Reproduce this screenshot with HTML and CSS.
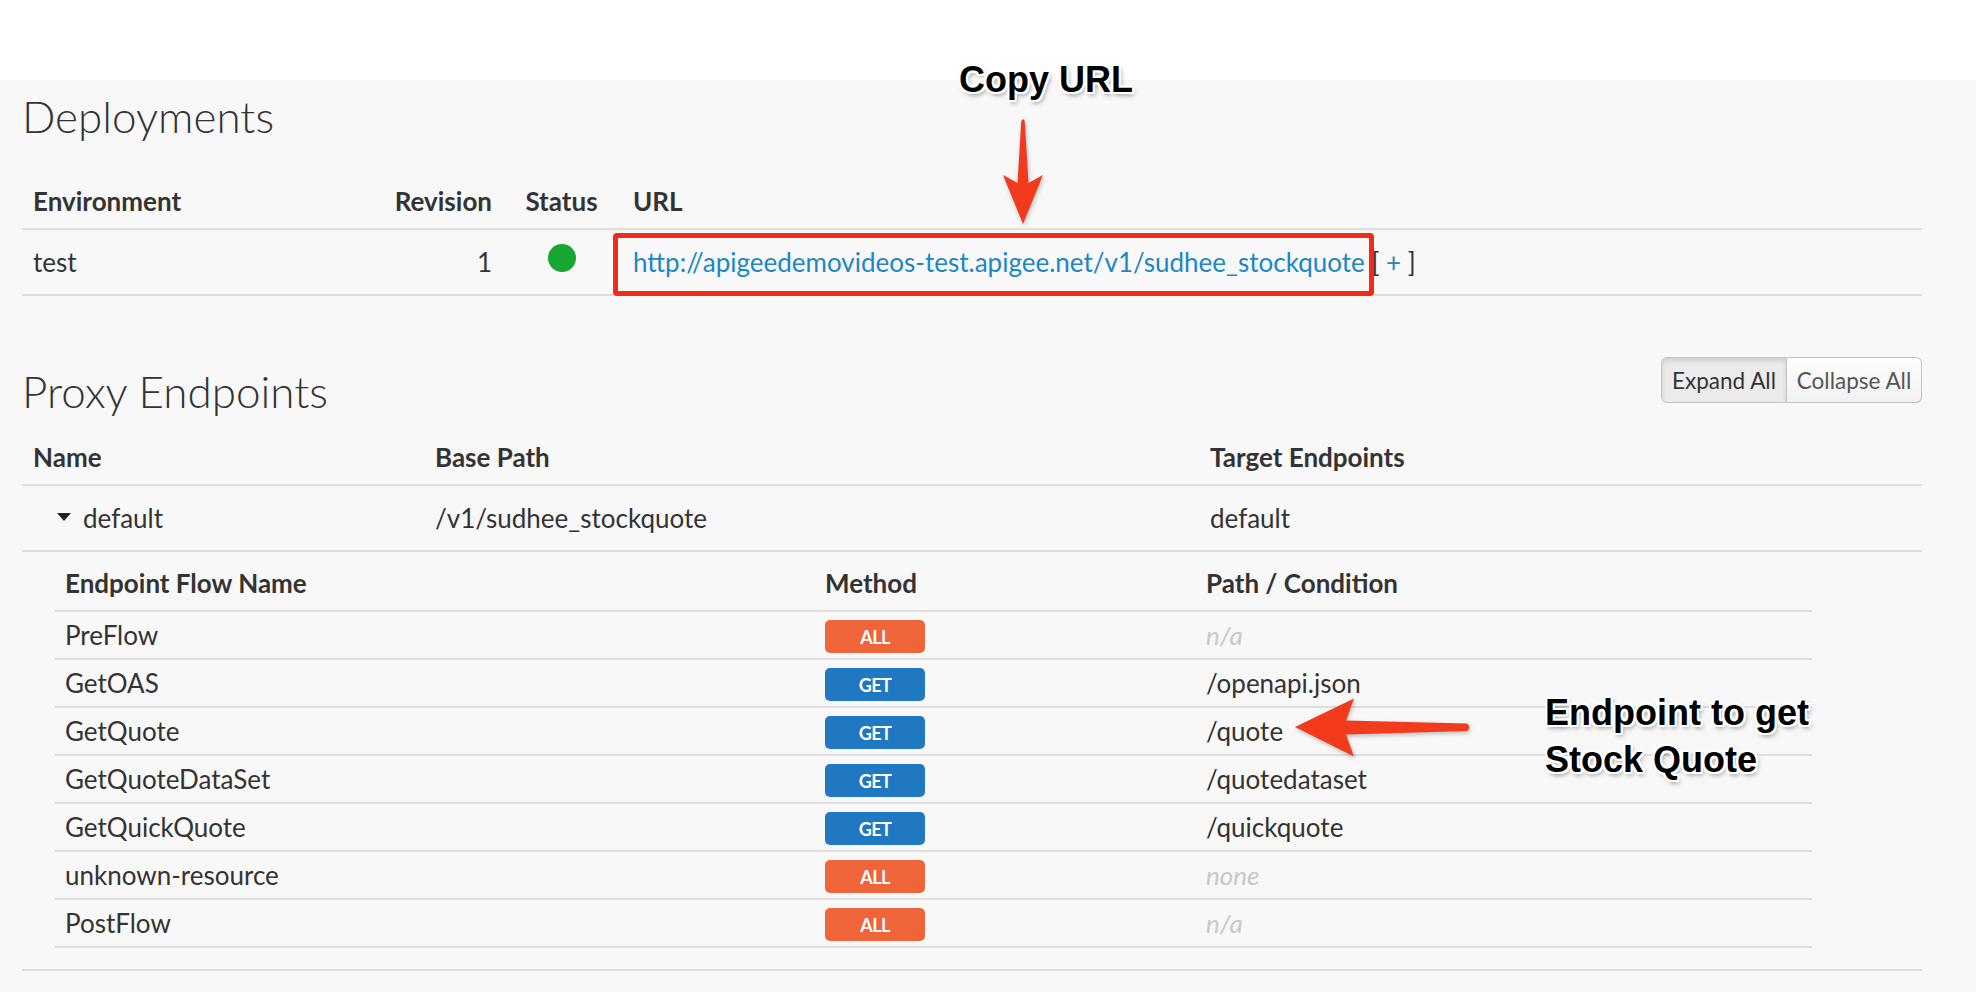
FILE: index.html
```html
<!DOCTYPE html>
<html lang="en">
<head>
<meta charset="utf-8">
<title>API Proxy Overview</title>
<link rel="stylesheet" href="styles.css">
</head>
<body>
<div class="topbar"></div>
<main class="content">
  <section class="deployments">
    <h2 class="section-title">Deployments</h2>
    <table class="tbl deploy-tbl">
      <colgroup><col class="c-env"><col class="c-rev"><col class="c-status"><col></colgroup>
      <thead>
        <tr><th>Environment</th><th class="right">Revision</th><th class="center">Status</th><th class="url-cell">URL</th></tr>
      </thead>
      <tbody>
        <tr>
          <td>test</td>
          <td class="right">1</td>
          <td class="center"><span class="dot"></span></td>
          <td class="url-cell"><a class="link" href="#">http://apigeedemovideos-test.apigee.net/v1/sudhee_stockquote</a> [ <a class="link" href="#">+</a> ]</td>
        </tr>
      </tbody>
    </table>
  </section>

  <section class="proxy">
    <div class="proxy-head">
      <h2 class="section-title proxy-title">Proxy Endpoints</h2>
      <div class="btn-group">
        <button class="btn btn-expand active">Expand All</button><button class="btn btn-collapse">Collapse All</button>
      </div>
    </div>
    <table class="tbl proxy-tbl">
      <colgroup><col class="c-name"><col class="c-base"><col></colgroup>
      <thead>
        <tr><th>Name</th><th>Base Path</th><th>Target Endpoints</th></tr>
      </thead>
      <tbody>
        <tr>
          <td><svg class="caret" width="14" height="8" viewBox="0 0 14 8"><path d="M0 0 H14 L7 8 Z" fill="#222"/></svg>default</td>
          <td>/v1/sudhee_stockquote</td>
          <td>default</td>
        </tr>
        <tr class="nested-row">
          <td colspan="3">
            <table class="flows">
              <colgroup><col class="c-flow"><col class="c-method"><col></colgroup>
              <thead>
                <tr><th>Endpoint Flow Name</th><th>Method</th><th>Path / Condition</th></tr>
              </thead>
              <tbody>
                <tr><td>PreFlow</td><td><span class="badge all">ALL</span></td><td class="muted">n/a</td></tr>
                <tr><td>GetOAS</td><td><span class="badge get">GET</span></td><td>/openapi.json</td></tr>
                <tr><td>GetQuote</td><td><span class="badge get">GET</span></td><td>/quote</td></tr>
                <tr><td>GetQuoteDataSet</td><td><span class="badge get">GET</span></td><td>/quotedataset</td></tr>
                <tr><td>GetQuickQuote</td><td><span class="badge get">GET</span></td><td>/quickquote</td></tr>
                <tr><td>unknown-resource</td><td><span class="badge all">ALL</span></td><td class="muted">none</td></tr>
                <tr><td>PostFlow</td><td><span class="badge all">ALL</span></td><td class="muted">n/a</td></tr>
              </tbody>
            </table>
          </td>
        </tr>
      </tbody>
    </table>
  </section>
</main>

<div class="redbox"></div>
<div class="annot copy-url">Copy URL</div>
<svg class="arrow arrow-down" width="56" height="115" viewBox="0 0 56 115">
  <path d="M26.3 6 Q28 2.5 29.7 6 L33.5 68 L48 60 L28 109 L8 60 L22.5 68 Z" fill="#f23a1c"/>
</svg>
<div class="annot endpoint-note">Endpoint to get<br>Stock Quote</div>
<svg class="arrow arrow-left" width="185" height="66" viewBox="0 0 185 66">
  <path d="M5 32 L64 3.5 L56 25.5 L177 28.5 Q181.5 32 177 36 L56 39.5 L64 61.5 Z" fill="#f23a1c"/>
</svg>
</body>
</html>
```

FILE: styles.css
```css
html, body {
  margin: 0;
  padding: 0;
}

body {
  position: relative;
  height: 992px;
  overflow: hidden;
  background: #f8f8f8;
  font-family: Lato, "Open Sans", "Liberation Sans", sans-serif;
  font-size: 26px;
  color: #333;
}

.topbar {
  height: 80px;
  background: #fff;
}

.content {
  padding: 0 54px 0 22px;
}

.section-title {
  margin: 13px 0 0;
  font-size: 44px;
  line-height: 47px;
  font-weight: 300;
  color: #333;
}

/* tables */
.tbl {
  width: 100%;
  border-collapse: collapse;
  table-layout: fixed;
}

.tbl th {
  padding: 10px 11px;
  line-height: 34px;
  font-weight: 700;
  text-align: left;
  vertical-align: bottom;
  border-bottom: 2px solid #dddddd;
  white-space: nowrap;
}

.tbl td {
  padding: 15px 11px;
  line-height: 34px;
  border-bottom: 2px solid #dddddd;
  white-space: nowrap;
}

.tbl .right { text-align: right; }
.tbl .center { text-align: center; }
.tbl .url-cell { padding-left: 13px; }

.deploy-tbl { margin-top: 34px; }
.c-env { width: 361px; }
.c-rev { width: 120px; }
.c-status { width: 117px; }

.link {
  color: #1d87c4;
  text-decoration: none;
}

.dot {
  display: inline-block;
  width: 28px;
  height: 28px;
  margin-top: -2px;
  border-radius: 50%;
  background: #17a631;
}

/* proxy endpoints */
.proxy-head {
  display: flex;
  justify-content: space-between;
  align-items: flex-start;
  margin-top: 61px;
}

.proxy-title { margin-top: 11px; }

.btn-group {
  display: flex;
}

.btn {
  box-sizing: border-box;
  height: 46px;
  padding: 0;
  font-family: inherit;
  font-size: 22.5px;
  white-space: nowrap;
  color: #555;
  border: 1.5px solid #c4c4c4;
  background: linear-gradient(#fefefe, #f1f1f1);
}

.btn-expand {
  width: 126px;
  color: #333;
  border-radius: 6px 0 0 6px;
  background: #ebebeb;
  box-shadow: inset 0 3px 5px rgba(0, 0, 0, 0.12);
}

.btn-collapse {
  width: 135px;
  border-left: none;
  border-radius: 0 6px 6px 0;
}

.proxy-tbl { margin-top: 15px; }
.c-name { width: 402px; }
.c-base { width: 775px; }

.caret {
  margin: 0 12px 0 24px;
  vertical-align: 7px;
}

.tbl .nested-row > td {
  padding: 6px 110px 21px 33px;
}

.flows {
  width: 100%;
  border-collapse: collapse;
  table-layout: fixed;
}

.c-flow { width: 760px; }
.c-method { width: 381px; }

.tbl .flows th {
  padding: 8px 10px 10px;
}

.tbl .flows td {
  padding: 6px 10px;
}

.muted {
  color: #c9c9c9;
  font-style: italic;
}

.badge {
  display: inline-block;
  width: 100px;
  height: 33px;
  margin: 2px 0 -1px;
  line-height: 34px;
  border-radius: 5px;
  color: #fff;
  font-size: 18px;
  font-weight: 700;
  letter-spacing: -0.5px;
  text-align: center;
  vertical-align: top;
}

.badge.all { background: #f0643a; }
.badge.get { background: #1f78c1; }

/* annotations overlaid on the screenshot */
.annot {
  position: absolute;
  font-family: "Liberation Sans", Arial, sans-serif;
  font-weight: 700;
  font-size: 36px;
  color: #000;
  text-shadow:
    -2px -2px 0 #fff, 2px -2px 0 #fff, -2px 2px 0 #fff, 2px 2px 0 #fff,
    0 -2px 0 #fff, 0 2px 0 #fff, -2px 0 0 #fff, 2px 0 0 #fff,
    2px 3px 5px rgba(0, 0, 0, 0.45);
  white-space: nowrap;
}

.copy-url {
  left: 959px;
  top: 62px;
  line-height: 36px;
}

.endpoint-note {
  left: 1545px;
  top: 689px;
  line-height: 47px;
}

.arrow {
  position: absolute;
  filter: drop-shadow(1px 2px 2px rgba(0, 0, 0, 0.25));
}

.arrow-down {
  left: 995px;
  top: 115px;
}

.arrow-left {
  left: 1290px;
  top: 695px;
}

.redbox {
  position: absolute;
  left: 613px;
  top: 233px;
  width: 761px;
  height: 63px;
  box-sizing: border-box;
  border: 5px solid #ee2c19;
  border-radius: 4px;
}
```
